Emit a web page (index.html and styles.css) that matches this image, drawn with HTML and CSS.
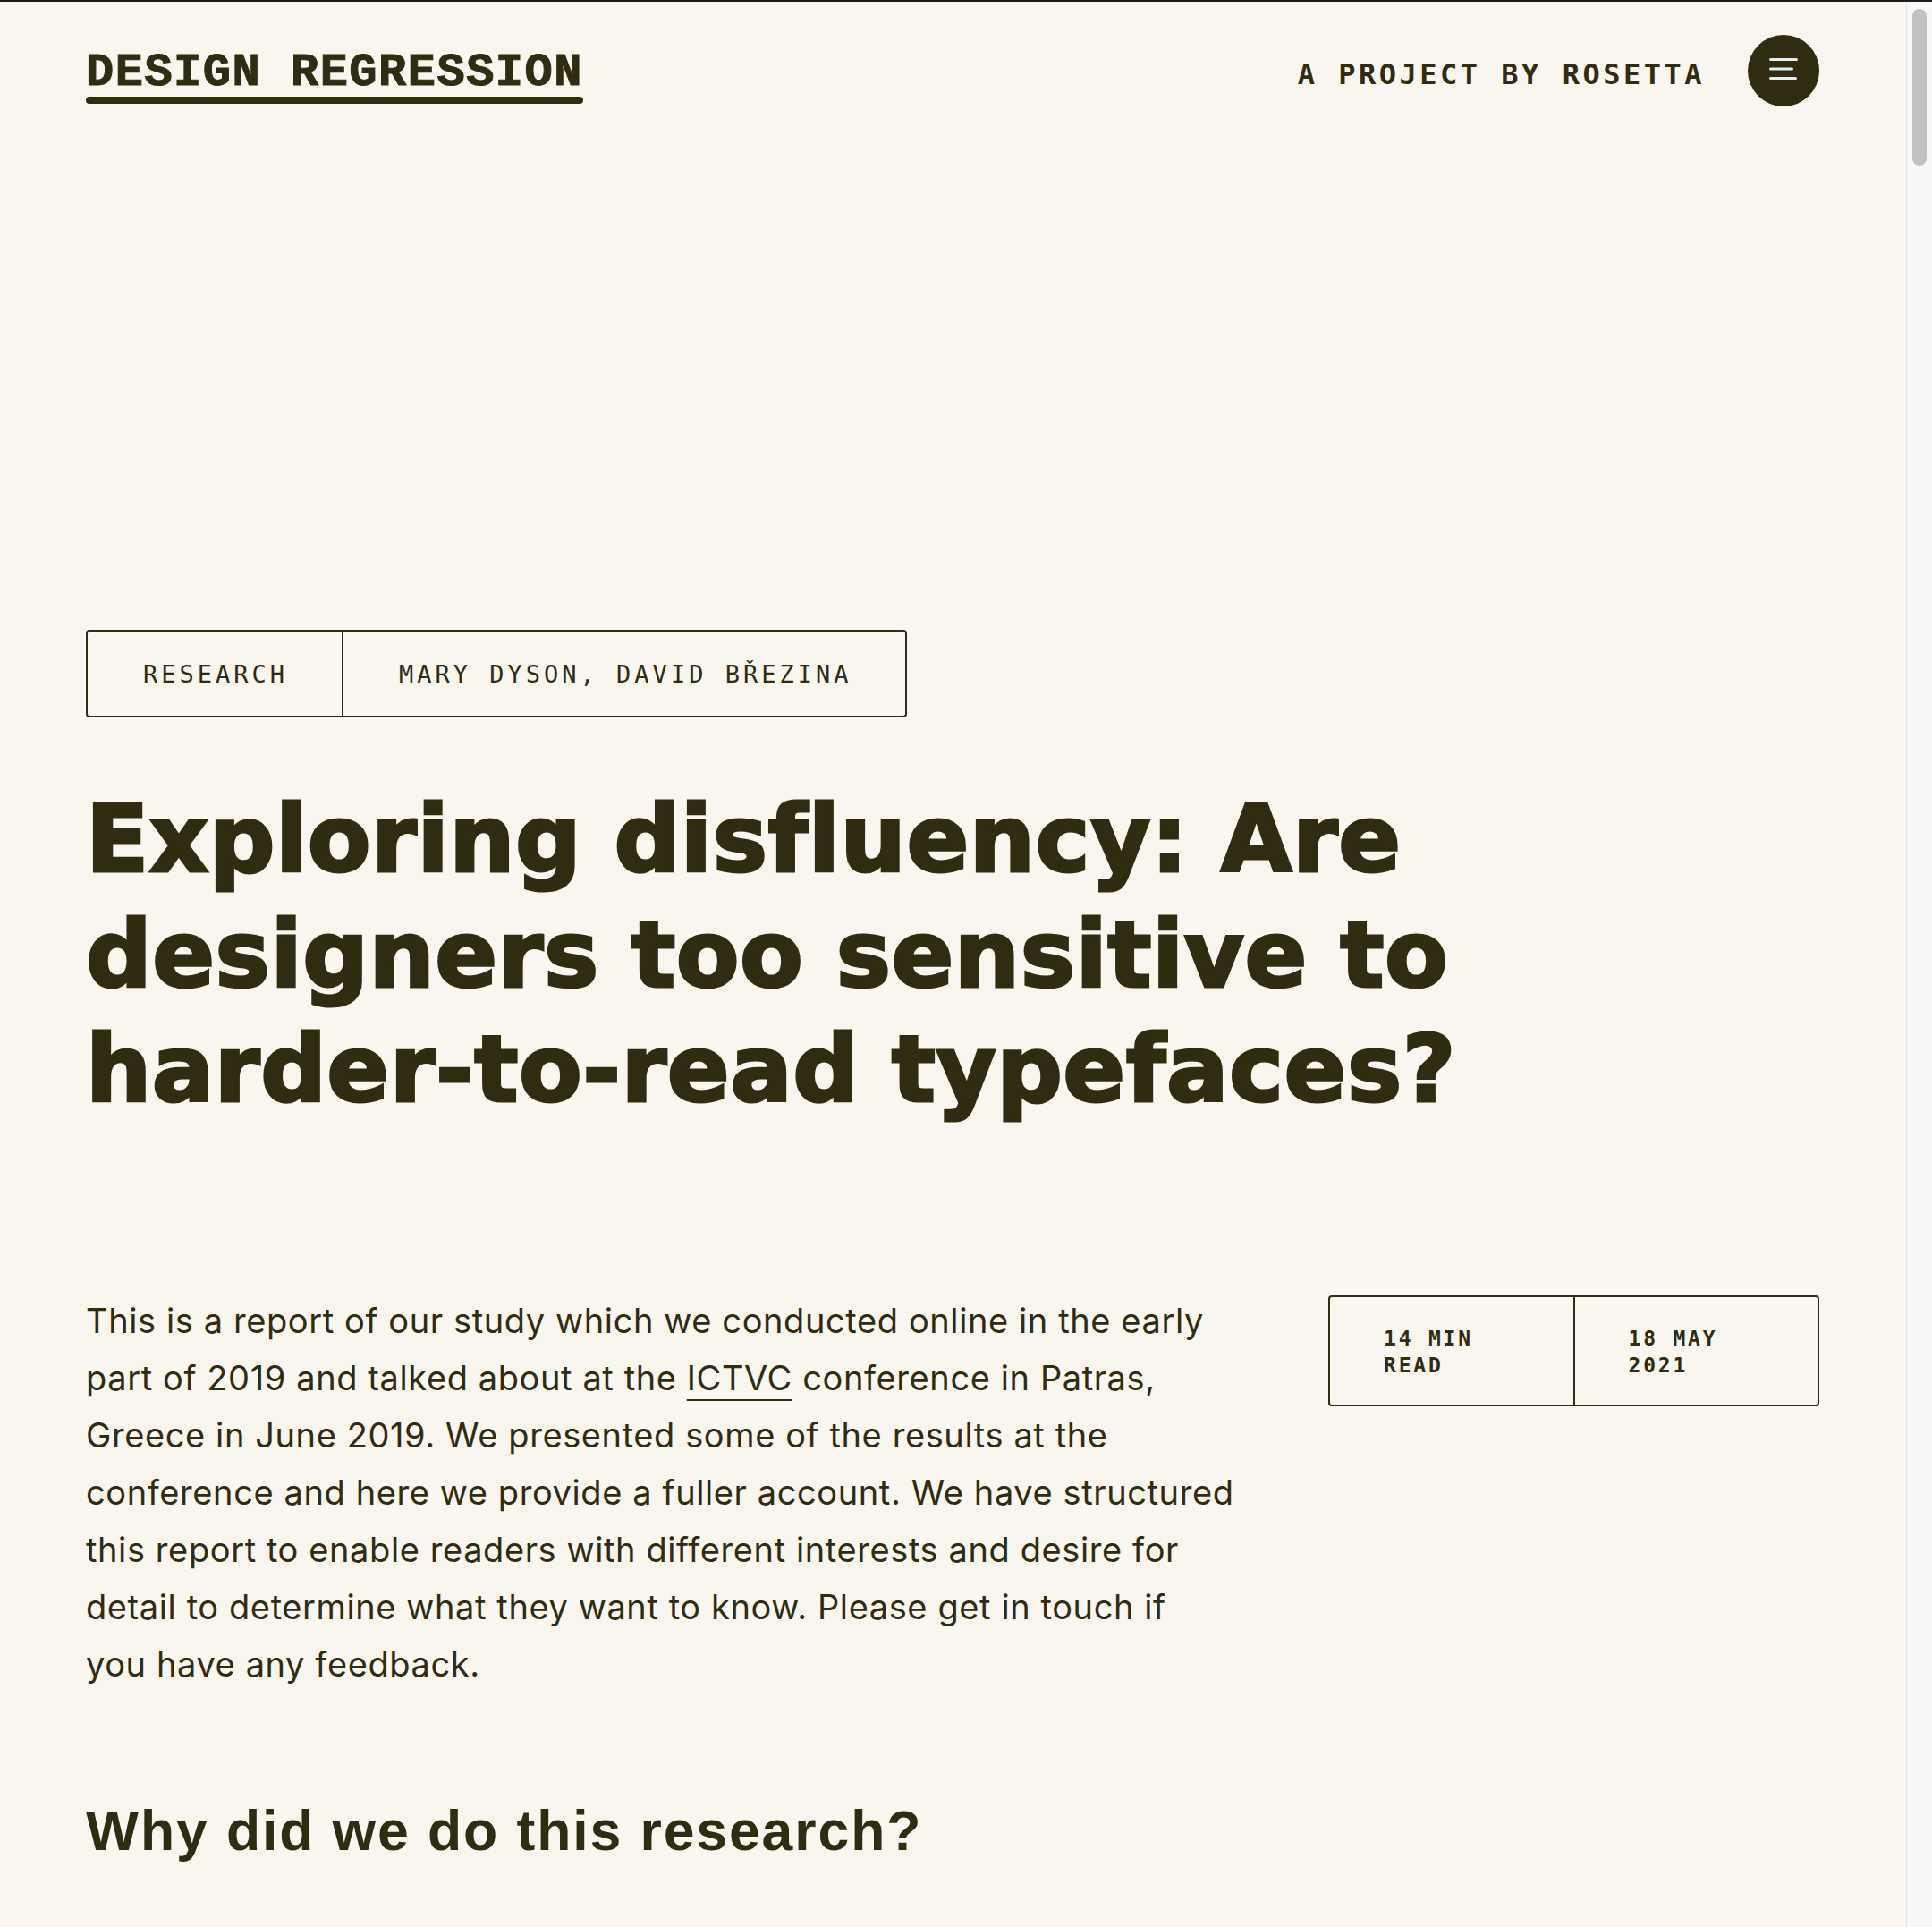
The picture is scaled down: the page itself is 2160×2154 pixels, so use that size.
FILE: index.html
```html
<!DOCTYPE html>
<html lang="en">
<head>
<meta charset="utf-8">
<title>Exploring disfluency — Design Regression</title>
<link rel="stylesheet" href="styles.css">
</head>
<body>
<div class="frame">
  <div class="page">
    <header class="site-header">
      <a class="logo" href="#">DESIGN REGRESSION</a>
      <div class="header-right">
        <span class="byline">A PROJECT BY ROSETTA</span>
        <button class="menu-btn" aria-label="Menu">
          <svg width="80" height="80" viewBox="0 0 80 80" aria-hidden="true">
            <line x1="25.5" y1="27.5" x2="54.5" y2="27.5"/>
            <line x1="25.5" y1="38" x2="49.5" y2="38"/>
            <line x1="25.5" y1="48.5" x2="53.5" y2="48.5"/>
          </svg>
        </button>
      </div>
    </header>

    <main class="article">
      <div class="tags">
        <span class="tag">RESEARCH</span>
        <span class="tag">MARY DYSON, DAVID BŘEZINA</span>
      </div>

      <h1 class="title">Exploring disfluency: Are<br>designers too sensitive to<br>harder-to-read typefaces?</h1>

      <div class="intro-row">
        <p class="lede">This is a report of our study which we conducted online in the early<br>part of 2019 and talked about at the <a class="link" href="#">ICTVC</a> conference in Patras,<br>Greece in June 2019. We presented some of the results at the<br>conference and here we provide a fuller account. We have structured<br>this report to enable readers with different interests and desire for<br>detail to determine what they want to know. Please get in touch if<br>you have any feedback.</p>
        <div class="meta">
          <span class="meta-cell">14 MIN READ</span>
          <span class="meta-cell">18 MAY 2021</span>
        </div>
      </div>

      <h2 class="section-title">Why did we do this research?</h2>
    </main>
  </div>
  <div class="scrollbar"><div class="scrollbar-thumb"></div></div>
</div>
</body>
</html>
```
FILE: styles.css
```css
html, body {
  margin: 0;
  padding: 0;
  background: #f9f6ef;
}

.frame {
  display: flex;
  height: 100vh;
  overflow: hidden;
  box-sizing: border-box;
  border-top: 2px solid #1c1c1c;
  color: #302c12;
}

.page {
  flex: 1;
  min-width: 0;
  padding: 0 97px 0 96px;
}

/* Header */
.site-header {
  display: flex;
  justify-content: space-between;
  align-items: flex-start;
  padding-top: 37px;
}

.logo {
  display: flex;
  flex-direction: column;
  margin-top: 17px;
  font-family: "Liberation Mono", "DejaVu Sans Mono", monospace;
  font-weight: 700;
  font-size: 52px;
  line-height: 52px;
  letter-spacing: 1.5px;
  color: #302c12;
  text-decoration: none;
  -webkit-text-stroke: 1px #302c12;
}

.logo::after {
  content: "";
  display: block;
  height: 8px;
  margin-top: 0;
  border-radius: 4px;
  background: #302c12;
}

.header-right {
  display: flex;
  align-items: flex-start;
  gap: 48px;
}

.byline {
  margin-top: 28px;
  font-family: "DejaVu Sans Mono", monospace;
  font-weight: 700;
  font-size: 32px;
  line-height: 32px;
  letter-spacing: 3.5px;
}

.menu-btn {
  width: 80px;
  height: 80px;
  padding: 0;
  border: 0;
  border-radius: 50%;
  background: #302c12;
  display: flex;
  align-items: center;
  justify-content: center;
}

.menu-btn svg line {
  stroke: #e4eef2;
  stroke-width: 3;
  stroke-linecap: round;
}

/* Article */
.article {
  padding-top: 585px;
}

.tags {
  display: flex;
  width: fit-content;
  border: 2px solid #302c12;
  border-radius: 4px;
}

.tag {
  display: flex;
  align-items: center;
  height: 94px;
  padding: 0 60px 0 62px;
  font-family: "DejaVu Sans Mono", monospace;
  font-size: 27px;
  letter-spacing: 4px;
}

.tag + .tag {
  border-left: 2px solid #302c12;
}

.title {
  margin: 72px 0 0;
  font-family: "DejaVu Sans", Inter, sans-serif;
  font-weight: 700;
  font-size: 103px;
  line-height: 128.5px;
  letter-spacing: 0.5px;
  -webkit-text-stroke: 3px #302c12;
}

.intro-row {
  display: flex;
  justify-content: space-between;
  align-items: flex-start;
  margin-top: 184px;
}

.lede {
  margin: 0;
  width: 1360px;
  font-family: Inter, "Liberation Sans", sans-serif;
  font-size: 38px;
  line-height: 64px;
  letter-spacing: 0.6px;
}

.link {
  color: inherit;
  text-decoration: underline;
  text-decoration-thickness: 2px;
  text-underline-offset: 10px;
}

.meta {
  flex: none;
  display: flex;
  width: 549px;
  margin-top: 4px;
  box-sizing: border-box;
  border: 2px solid #302c12;
  border-radius: 4px;
}

.meta-cell {
  flex: 1;
  padding: 31px 50px 29px 60px;
  font-family: "DejaVu Sans Mono", monospace;
  font-weight: 700;
  font-size: 23px;
  line-height: 30px;
  letter-spacing: 2.8px;
}

.meta-cell + .meta-cell {
  border-left: 2px solid #302c12;
}

.section-title {
  margin: 117px 0 0;
  font-family: "Liberation Sans", Arial, sans-serif;
  font-weight: 700;
  font-size: 62.5px;
  line-height: 75px;
  letter-spacing: 1.9px;
}

/* Scrollbar */
.scrollbar {
  flex: none;
  width: 28px;
  background: #f8f8f8;
  border-left: 1px solid #e4e4e4;
}

.scrollbar-thumb {
  width: 16px;
  height: 175px;
  margin: 8px 0 0 6px;
  border-radius: 8px;
  background: #c1c1c1;
}
```
